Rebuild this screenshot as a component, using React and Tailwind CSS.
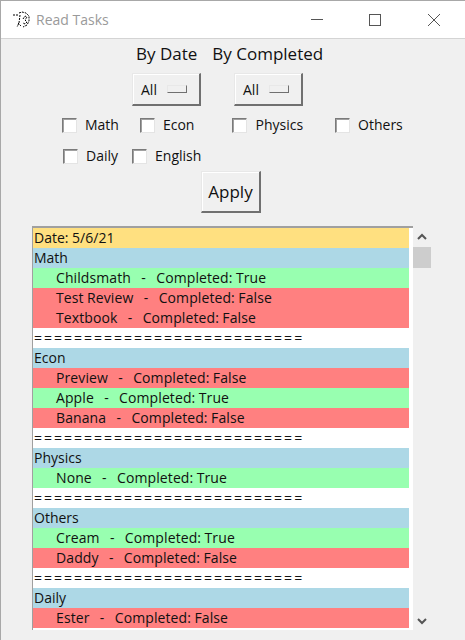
import React from 'react';

const SEP = '===========================';

const rows = [
  { text: 'Date: 5/6/21', kind: 'date' },
  { text: 'Math', kind: 'head' },
  { text: 'Childsmath   -   Completed: True', kind: 'done' },
  { text: 'Test Review   -   Completed: False', kind: 'todo' },
  { text: 'Textbook   -   Completed: False', kind: 'todo' },
  { text: SEP, kind: 'sep' },
  { text: 'Econ', kind: 'head' },
  { text: 'Preview   -   Completed: False', kind: 'todo' },
  { text: 'Apple   -   Completed: True', kind: 'done' },
  { text: 'Banana   -   Completed: False', kind: 'todo' },
  { text: SEP, kind: 'sep' },
  { text: 'Physics', kind: 'head' },
  { text: 'None   -   Completed: True', kind: 'done' },
  { text: SEP, kind: 'sep' },
  { text: 'Others', kind: 'head' },
  { text: 'Cream   -   Completed: True', kind: 'done' },
  { text: 'Daddy   -   Completed: False', kind: 'todo' },
  { text: SEP, kind: 'sep' },
  { text: 'Daily', kind: 'head' },
  { text: 'Ester   -   Completed: False', kind: 'todo' },
];

const rowStyles = {
  date: 'bg-[#ffe080] pl-px',
  head: 'bg-[#add8e6] pl-px',
  done: 'bg-[#98ffb0] pl-[23px] tracking-[0.1px] [word-spacing:-0.3px]',
  todo: 'bg-[#ff8080] pl-[23px] tracking-[0.1px] [word-spacing:-0.3px]',
  sep: 'bg-white pl-px tracking-[2px]',
};

function Check({ label, className }) {
  return (
    <div className={`flex items-center ${className}`}>
      <span className="w-[15px] h-[15px] bg-white border border-[#7a7a7a] border-r-[#e4e4e4] border-b-[#e4e4e4] shadow-[inset_1px_1px_0_#a0a0a0]" />
      <span className="ml-2 text-[14px] leading-5 text-[#111]">{label}</span>
    </div>
  );
}

function Menu({ className }) {
  return (
    <div className={`w-[69px] h-[33px] flex items-center pl-[8px] bg-[#f0f0f0] border border-[#e8e8e8] border-r-2 border-b-2 border-r-[#707070] border-b-[#707070] shadow-[inset_1px_1px_0_#fff] ${className}`}>
      <span className="text-[14px] text-[#111]">All</span>
      <span className="ml-[10px] w-[20px] h-[8px] bg-[#f0f0f0] border border-[#e8e8e8] border-r-[#707070] border-b-[#707070]" />
    </div>
  );
}

export default function App() {
  return (
    <div className="w-[465px] h-[640px] overflow-hidden bg-[#f0f0f0] border-t border-l border-[#a8a8a8] font-['Open_Sans',sans-serif] text-black">
      {/* title bar */}
      <div className="h-[38px] bg-white border-b border-[#d4d4d4] flex items-center pl-[11px]">
        <svg width="18" height="18" viewBox="0 0 18 18" fill="none" stroke="#000" strokeWidth="1" strokeDasharray="2 1">
          <path d="M1 4h6M7 2l3-1 4 1 3 3 0 5-2 4-4 2M8 4l-1 8-2 4M11 8l2-3 2 1-2 3 2 2-2 2-2-1M6 12l3 3" />
        </svg>
        <span className="ml-[6px] text-[14px] text-[#9a9a9a]">Read Tasks</span>
        <svg className="ml-auto mr-[24px]" width="130" height="14" viewBox="0 0 130 14" fill="none" stroke="#555" strokeWidth="1">
          <path d="M0 6.5h12" />
          <rect x="58.5" y="1.5" width="11" height="11" />
          <path d="M117 1l12 12M129 1l-12 12" />
        </svg>
      </div>

      {/* filters */}
      <div className="flex pl-[135px] pt-[4px] text-[17px] leading-[22px] text-[#111]">
        <span>By Date</span>
        <span className="ml-[15px]">By Completed</span>
      </div>
      <div className="flex mt-[8px]">
        <Menu className="ml-[131px]" />
        <Menu className="ml-[33px]" />
      </div>
      <div className="flex mt-[9px] h-[20px]">
        <Check label="Math" className="ml-[61px]" />
        <Check label="Econ" className="ml-[21px]" />
        <Check label="Physics" className="ml-[38px]" />
        <Check label="Others" className="ml-[32px]" />
      </div>
      <div className="flex mt-[11px] h-[20px]">
        <Check label="Daily" className="ml-[62px]" />
        <Check label="English" className="ml-[14px]" />
      </div>
      <div className="flex mt-[5px]">
        <div className="ml-[200px] w-[60px] h-[42px] flex items-center justify-center bg-[#f0f0f0] border border-[#e8e8e8] border-r-2 border-b-2 border-r-[#707070] border-b-[#707070] shadow-[inset_1px_1px_0_#fff] text-[17px] text-[#111]">
          Apply
        </div>
      </div>

      {/* task list + scrollbar */}
      <div className="flex mt-[13px] ml-[31px]">
        <div className="w-[381px] h-[404px] bg-white border-t-2 border-l border-t-[#a0a0a0] border-l-[#a0a0a0] pr-[4px] overflow-hidden">
          {rows.map((row, i) => (
            <div key={i} className={`h-[20px] leading-[20px] text-[14px] whitespace-pre text-[#111] ${rowStyles[row.kind]}`}>
              {row.text}
            </div>
          ))}
        </div>
        <div className="w-[18px] h-[404px] flex flex-col items-center">
          <svg className="mt-[7px]" width="10" height="7" viewBox="0 0 10 7" fill="none" stroke="#555" strokeWidth="2">
            <path d="M1 6l4-4 4 4" />
          </svg>
          <div className="mt-[7px] w-[18px] h-[21px] bg-[#cdcdcd]" />
          <svg className="mt-auto mb-[5px]" width="10" height="7" viewBox="0 0 10 7" fill="none" stroke="#555" strokeWidth="2">
            <path d="M1 1l4 4 4-4" />
          </svg>
        </div>
      </div>
    </div>
  );
}
